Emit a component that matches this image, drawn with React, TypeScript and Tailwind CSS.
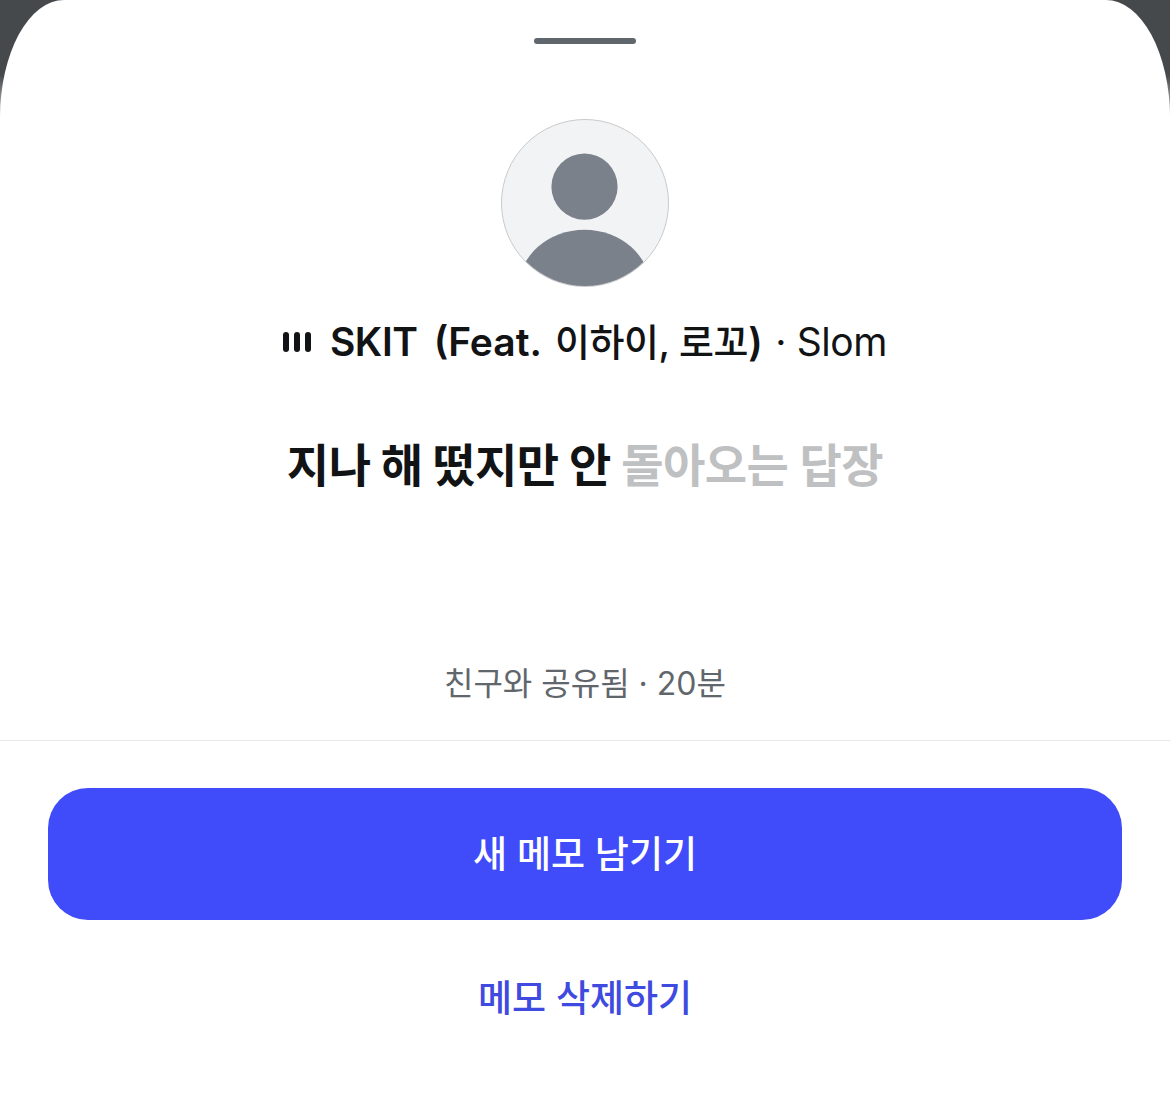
export default function App() {
  return (
    <div className="w-[1170px] h-[1114px] overflow-hidden bg-[linear-gradient(to_bottom,#45494c_0px,#45494c_75px,#ffffff_135px)] font-['Inter','Noto_Sans_CJK_KR',sans-serif]">
      <div className="h-full bg-white rounded-t-[64px_118px] flex flex-col items-center">
        <div className="mt-[38px] w-[102px] h-[6px] rounded-full bg-[#5f666c]" />
        <div className="mt-[75px] w-[168px] h-[168px] rounded-full border border-[#c9cacc] bg-[#f1f3f5] overflow-hidden">
          <svg viewBox="0 0 168 168" className="w-full h-full block">
            <circle cx="83.5" cy="67.5" r="33.5" fill="#7a818a" />
            <ellipse cx="83.5" cy="171" rx="67" ry="60" fill="#7a818a" />
          </svg>
        </div>
        <div className="mt-[32px] h-[46px] flex items-center text-[39px] leading-[46px] text-[#111315] whitespace-nowrap">
          <svg width="28" height="20" viewBox="0 0 28 20" className="mr-[19px] shrink-0" fill="#111315">
            <rect x="0" y="0" width="6" height="20" rx="3" />
            <rect x="11" y="0" width="6" height="20" rx="3" />
            <rect x="22" y="0" width="6" height="20" rx="3" />
          </svg>
          <span className="font-semibold tracking-[-0.4px]">SKIT</span>
          <span className="font-semibold ml-[16px]">(Feat.</span>
          <span className="font-medium text-[38px] ml-[13px] tracking-[-0.4px]">이하이, 로꼬</span>
          <span className="font-semibold">)</span>
          <span className="font-normal ml-[2px] tracking-[-0.4px]">&nbsp;· Slom</span>
        </div>
        <div className="mt-[67px] h-[66px] flex items-center text-[46px] leading-[66px] tracking-[-0.5px] font-bold whitespace-nowrap text-[#111315]">
          <span>지나 해 떴지만 안&nbsp;</span>
          <span className="text-[#bfc0c2] font-semibold">돌아오는 답장</span>
        </div>
        <div className="mt-[166px] h-[40px] flex items-center text-[32px] leading-[40px] text-[#5f666c] whitespace-nowrap">
          친구와 공유됨 · 20분
        </div>
        <div className="mt-[36px] w-full h-px bg-[#e7e8e9]" />
        <div className="mt-[47px] w-[1074px] h-[132px] rounded-[40px] bg-[#404cf9] flex items-center justify-center text-white text-[37px] font-medium leading-none whitespace-nowrap">
          새 메모 남기기
        </div>
        <div className="mt-[53px] h-[50px] flex items-center text-[#3e4ae0] text-[37px] font-medium leading-none whitespace-nowrap">
          메모 삭제하기
        </div>
      </div>
    </div>
  );
}
